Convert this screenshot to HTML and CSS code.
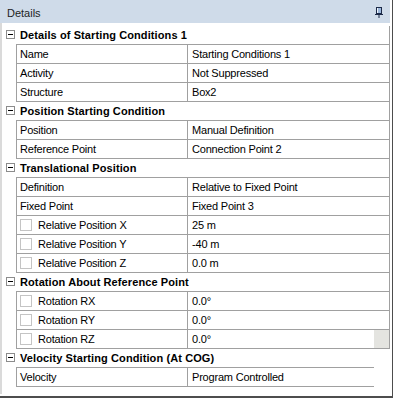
FILE: index.html
```html
<!DOCTYPE html>
<html lang="en">
<head>
    <meta charset="UTF-8">
    <meta name="viewport" content="width=device-width, initial-scale=1.0">
    <title>Details</title>
    <link rel="stylesheet" href="styles.css">
</head>
<body>
    <div class="panel">
        <div class="titlebar">
            <span>Details</span>
            <svg class="pin" width="8" height="11" viewBox="0 0 8 11">
                <rect x="1.5" y="0.5" width="5" height="6" fill="#9db8dc" stroke="#1c2a48"/>
                <rect x="2" y="1" width="1" height="5" fill="#eef3fa"/>
                <rect x="0" y="7" width="8" height="1" fill="#1c2a48"/>
                <rect x="3.5" y="8" width="1" height="3" fill="#1c2a48"/>
            </svg>
        </div>
        <div class="grid">
            <div class="row group">
                <div class="gutter"><span class="toggle"></span></div>
                <div class="body">Details of Starting Conditions 1</div>
            </div>
            <div class="row prop">
                <div class="gutter"></div>
                <div class="body"><div class="name">Name</div><div class="value">Starting Conditions 1</div></div>
            </div>
            <div class="row prop">
                <div class="gutter"></div>
                <div class="body"><div class="name">Activity</div><div class="value">Not Suppressed</div></div>
            </div>
            <div class="row prop">
                <div class="gutter"></div>
                <div class="body"><div class="name">Structure</div><div class="value">Box2</div></div>
            </div>

            <div class="row group">
                <div class="gutter"><span class="toggle"></span></div>
                <div class="body">Position Starting Condition</div>
            </div>
            <div class="row prop">
                <div class="gutter"></div>
                <div class="body"><div class="name">Position</div><div class="value">Manual Definition</div></div>
            </div>
            <div class="row prop">
                <div class="gutter"></div>
                <div class="body"><div class="name">Reference Point</div><div class="value">Connection Point 2</div></div>
            </div>

            <div class="row group">
                <div class="gutter"><span class="toggle"></span></div>
                <div class="body">Translational Position</div>
            </div>
            <div class="row prop">
                <div class="gutter"></div>
                <div class="body"><div class="name">Definition</div><div class="value">Relative to Fixed Point</div></div>
            </div>
            <div class="row prop">
                <div class="gutter"></div>
                <div class="body"><div class="name">Fixed Point</div><div class="value">Fixed Point 3</div></div>
            </div>
            <div class="row prop">
                <div class="gutter"></div>
                <div class="body"><div class="name"><span class="check"></span>Relative Position X</div><div class="value">25 m</div></div>
            </div>
            <div class="row prop">
                <div class="gutter"></div>
                <div class="body"><div class="name"><span class="check"></span>Relative Position Y</div><div class="value">-40 m</div></div>
            </div>
            <div class="row prop">
                <div class="gutter"></div>
                <div class="body"><div class="name"><span class="check"></span>Relative Position Z</div><div class="value">0.0 m</div></div>
            </div>

            <div class="row group">
                <div class="gutter"><span class="toggle"></span></div>
                <div class="body">Rotation About Reference Point</div>
            </div>
            <div class="row prop">
                <div class="gutter"></div>
                <div class="body"><div class="name"><span class="check"></span>Rotation RX</div><div class="value">0.0°</div></div>
            </div>
            <div class="row prop">
                <div class="gutter"></div>
                <div class="body"><div class="name"><span class="check"></span>Rotation RY</div><div class="value">0.0°</div></div>
            </div>
            <div class="row prop">
                <div class="gutter"></div>
                <div class="body"><div class="name"><span class="check"></span>Rotation RZ</div><div class="value">0.0°<span class="stub"></span></div></div>
            </div>

            <div class="row group short">
                <div class="gutter"><span class="toggle"></span></div>
                <div class="body">Velocity Starting Condition (At COG)</div>
            </div>
            <div class="row prop short">
                <div class="gutter"></div>
                <div class="body"><div class="name">Velocity</div><div class="value">Program Controlled</div></div>
            </div>
        </div>
    </div>
</body>
</html>
```

FILE: styles.css
```css
body {
    margin: 0;
    font-family: "Liberation Sans", Arial, sans-serif;
    font-size: 11px;
    color: #000;
    background: #fff;
}
.panel {
    width: 393px;
    height: 398px;
    box-sizing: border-box;
    border-right: 1px solid #4d4d4d;
    border-bottom: 2px solid #4d4d4d;
    background: #fff;
    overflow: hidden;
}
.titlebar {
    height: 23px;
    box-sizing: border-box;
    padding: 4px 7px 0 7px;
    margin-right: 2px;
    line-height: 19px;
    background: #cfdbe9;
    color: #1e1e1e;
    display: flex;
    justify-content: space-between;
}
.pin {
    margin-top: 3px;
}
.grid {
    height: 371px;
    box-sizing: border-box;
    padding-top: 3px;
    border-left: 2px solid #dadada;
}
.row {
    display: flex;
    height: 19px;
}
.gutter {
    width: 14px;
    flex: none;
}
.toggle {
    display: block;
    width: 9px;
    height: 9px;
    box-sizing: border-box;
    border: 1px solid #8c8c8c;
    margin: 4px 0 0 4px;
}
.toggle::after {
    content: "";
    display: block;
    height: 1px;
    margin: 3px 1px 0;
    background: #000;
}
.body {
    width: 374px;
    box-sizing: border-box;
    border-bottom: 1px solid #a0a0a0;
    border-right: 1px solid #a0a0a0;
    line-height: 18px;
    display: flex;
}
.group .body {
    padding-left: 4px;
    font-weight: bold;
    letter-spacing: 0.1px;
}
.prop .body {
    border-left: 1px solid #a0a0a0;
    letter-spacing: -0.2px;
}
.short .body {
    width: 358px;
    border-right: none;
}
.name {
    width: 170px;
    flex: none;
    box-sizing: border-box;
    padding-left: 3px;
    display: flex;
    align-items: center;
}
.value {
    flex: 1;
    border-left: 1px solid #a0a0a0;
    padding-left: 4px;
    display: flex;
}
.check {
    width: 12px;
    height: 12px;
    box-sizing: border-box;
    border: 1px solid #c4c4c4;
    margin-right: 6px;
}
.stub {
    margin-left: auto;
    width: 15px;
    background: #e4e4e0;
}
```
